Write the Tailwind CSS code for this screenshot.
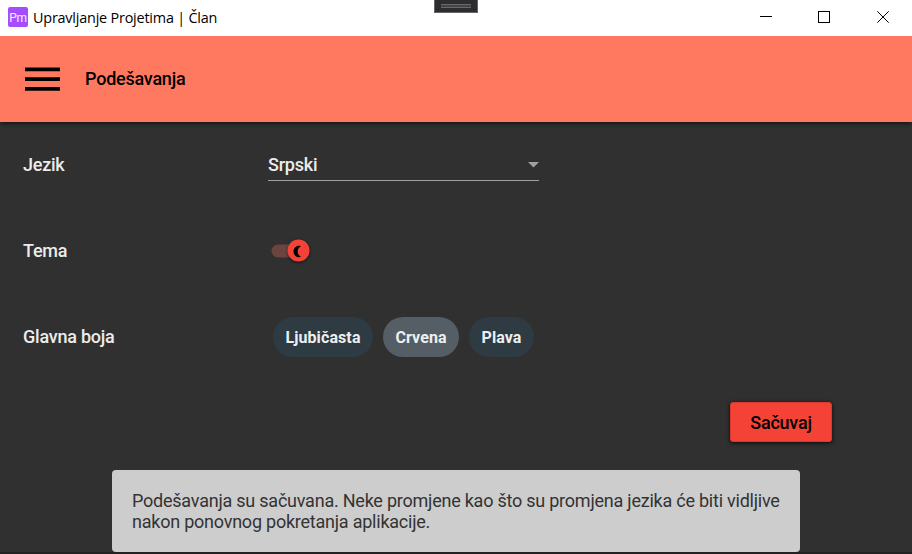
<!DOCTYPE html>
<html lang="sr-Latn">
<head>
<meta charset="utf-8">
<title>Upravljanje Projetima | Član</title>
<script src="https://cdn.jsdelivr.net/npm/@tailwindcss/browser@4"></script>
</head>
<body class="w-[912px] h-[554px] overflow-hidden bg-[#303030] font-[Roboto,sans-serif] text-[18px] leading-[21px] tracking-[-0.23px]">
<div class="relative flex flex-col h-[554px]">
  <div class="relative z-10 flex h-9 shrink-0 items-center bg-white pl-2 text-black">
    <div class="flex size-5 -mt-0.5 items-center justify-center rounded-[2px] bg-[#a54cff] pt-px text-[12px] leading-none tracking-[-0.2px] text-white/90"><span>Pm</span></div>
    <h1 class="ml-[5px] -mt-0.5 flex-1 font-['Open_Sans',sans-serif] text-[14.4px] tracking-[-0.2px]">Upravljanje Projetima | Član</h1>
    <svg class="w-[172px] h-9" viewBox="0 0 172 36" fill="none" stroke="#000" shape-rendering="crispEdges"><path d="M20 16.500h12M78.500 11.500h11v11h-11z"/><path shape-rendering="auto" d="M137.300 11.300l11.400 11.400M148.700 11.300l-11.400 11.400"/></svg>
  </div>
  <header class="relative flex h-[86px] shrink-0 items-center border-b border-[#ff7961] bg-[#ff7961] pl-[25px] shadow-[0_1px_5px_rgba(0,0,0,0.75)]">
    <svg class="mt-px w-[35px] h-6" viewBox="0 0 35 24" fill="#000"><path d="M0 .5h35v3.700H0zM0 10.300h35V14H0zM0 20h35v3.700H0z"/></svg>
    <h2 class="-mt-px ml-[25px] font-medium text-black">Podešavanja</h2>
  </header>
  <main class="flex flex-col font-medium text-[#ececec]">
    <div class="grid h-[86px] grid-cols-[245px_271px] items-center pl-[23px]">
      <label class="-mt-0.5">Jezik</label>
      <div class="-mt-px flex h-[33px] items-center justify-between border-b border-[#a0a0a0]"><span>Srpski</span>
        <svg class="mt-0.5 w-[11px] h-[6px]" viewBox="0 0 11 6" fill="#a0a0a0"><path d="M0 0h11L5.500 5.500z"/></svg></div>
    </div>
    <div class="grid h-[86px] grid-cols-[245px_271px] items-center pl-[23px]">
      <label class="-mt-0.5">Tema</label>
      <svg class="w-[48px] h-[34px]" viewBox="0 0 48 34"><rect x="3.500" y="10.500" width="34" height="13" rx="6.500" fill="#6b443e"/><circle class="drop-shadow-[0_1px_1.500px_rgba(0,0,0,0.6)]" cx="30.500" cy="16.500" r="11" fill="#f44336"/><path d="M33 12.200c-4-1.500-7.500 1.300-7.500 5.300s3.500 6.800 7.500 5.300c-4.500-2.400-4.500-8.200 0-10.600z" fill="#000"/></svg>
    </div>
    <div class="grid h-[86px] grid-cols-[250px_1fr] items-center pl-[23px]">
      <label class="-mt-0.5">Glavna boja</label>
      <div class="flex gap-[10px] text-[16px] font-bold leading-[20px] tracking-[0.1px] text-[#eceff1]">
        <span class="flex h-10 w-[100px] items-center justify-center rounded-[20px] bg-[#2e3b42] pt-[2px]">Ljubičasta</span>
        <span class="flex h-10 w-[76px] items-center justify-center rounded-[20px] bg-[#545e64] pt-[2px]">Crvena</span>
        <span class="flex h-10 w-[65px] items-center justify-center rounded-[20px] bg-[#2e3b42] pt-[2px]">Plava</span>
      </div>
    </div>
    <div class="flex justify-end pt-[22px] pr-20">
      <button class="h-10 w-[102px] rounded-[3px] border border-[#d9392e] bg-[#f44336] font-medium tracking-[-0.23px] text-black shadow-[0_1px_4px_rgba(0,0,0,0.8)]">Sačuvaj</button>
    </div>
  </main>
  <div role="status" class="ml-[112px] mt-auto mb-[2px] h-[82px] w-[688px] shrink-0 whitespace-nowrap rounded-[4px] bg-[#cdcdcd] pt-5 pl-5 text-[#333]">Podešavanja su sačuvana. Neke promjene kao što su promjena jezika će biti vidljive<br>nakon ponovnog pokretanja aplikacije.</div>
  <div class="absolute inset-x-0 bottom-0 h-[2px] bg-[#222]"></div>
  <div class="absolute left-[434px] top-0 z-20 h-[13px] w-11 border border-t-0 border-[#66666a] bg-[#2d2d30]"><div class="mx-auto mt-1 h-1 w-[30px] border-y border-[#69696c] bg-[#454548]"></div></div>
</div>
</body>
</html>
